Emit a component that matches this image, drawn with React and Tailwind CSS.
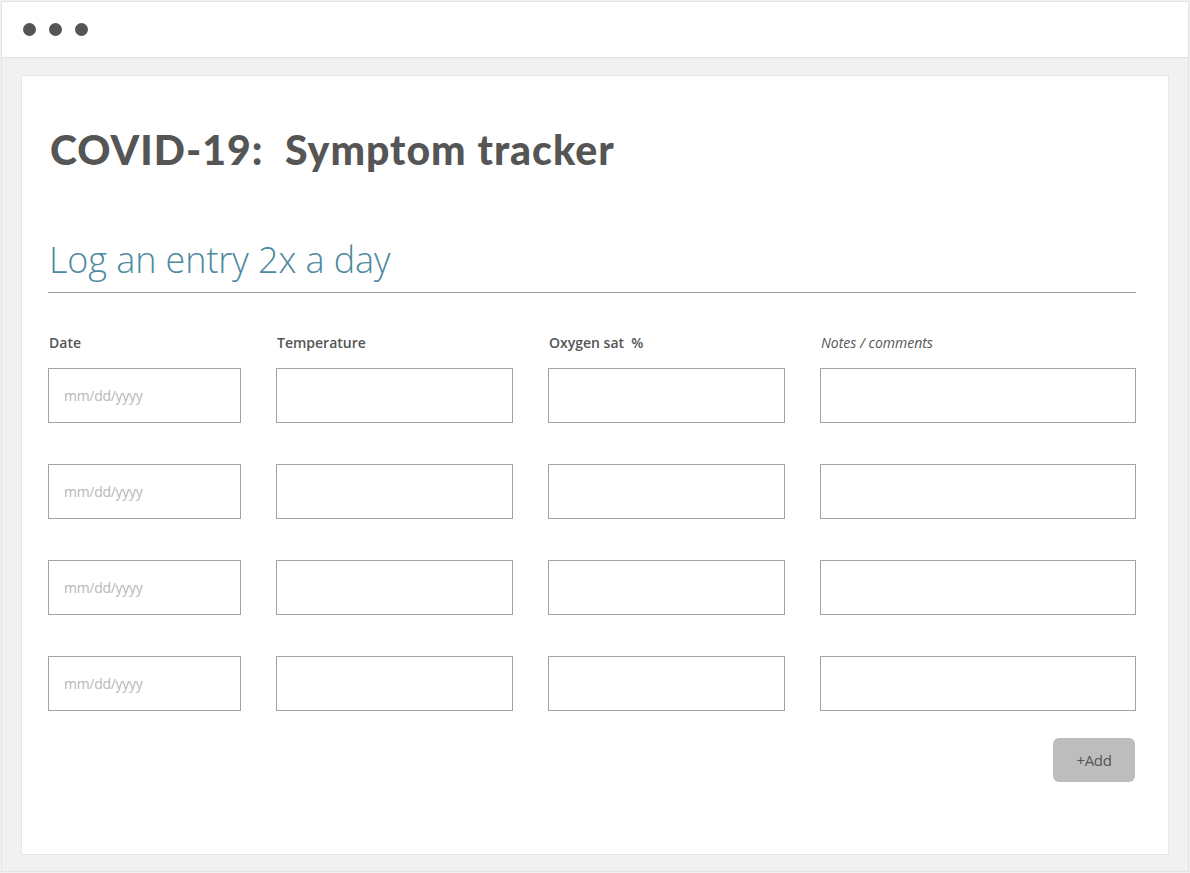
import React from 'react';

const rows = [0, 1, 2, 3];

function Field({ w, placeholder }) {
  return (
    <div className={`${w} h-[55px] border border-[#a3a3a3] bg-white flex items-center px-[15px]`}>
      {placeholder && <span className="text-[14px] text-[#b8b8b8] tracking-[-0.3px]">{placeholder}</span>}
    </div>
  );
}

export default function App() {
  return (
    <div className="w-[1190px] h-[873px] bg-[#f1f1f1] p-px font-['Open_Sans',sans-serif] text-[#555]">
      <div className="h-[871px] w-[1188px] border border-[#e4e4e4] flex flex-col">
        <div className="h-[56px] bg-white border-b border-[#e4e4e4] flex items-center gap-[13px] pl-[21px] shrink-0">
          <span className="w-[13px] h-[13px] rounded-full bg-[#555]" />
          <span className="w-[13px] h-[13px] rounded-full bg-[#555]" />
          <span className="w-[13px] h-[13px] rounded-full bg-[#555]" />
        </div>

        <div className="ml-[19px] mt-[17px] w-[1148px] h-[780px] bg-white border border-[#e6e6e6] pl-[26px] pt-[48px]">
          <h1 className="font-['Lato',sans-serif] font-black text-[41px] leading-[52px] text-[#555] tracking-[1px] whitespace-pre pl-[2px]">
            COVID-19:  Symptom tracker
          </h1>

          <div className="mt-[60px] w-[1088px] border-b border-[#999] pb-[8px]">
            <h2 className="font-light text-[36px] leading-[48px] text-[#4d8aa0] tracking-[-0.1px] pl-[1px]">Log an entry 2x a day</h2>
          </div>

          <div className="mt-[40px] flex gap-[35px] text-[14px] font-semibold leading-[20px] pl-[1px]">
            <div className="w-[193px]">Date</div>
            <div className="w-[237px]">Temperature</div>
            <div className="w-[237px] whitespace-pre">Oxygen sat  %</div>
            <div className="w-[316px] italic font-normal">Notes / comments</div>
          </div>

          <div className="mt-[15px] flex flex-col gap-[41px]">
            {rows.map((r) => (
              <div key={r} className="flex gap-[35px]">
                <Field w="w-[193px]" placeholder="mm/dd/yyyy" />
                <Field w="w-[237px]" />
                <Field w="w-[237px]" />
                <Field w="w-[316px]" />
              </div>
            ))}
          </div>

          <div className="w-[1087px] flex justify-end mt-[27px]">
            <button className="w-[82px] h-[44px] rounded-[6px] bg-[#bdbdbd] text-[15px] text-[#555] tracking-[-0.3px]">+Add</button>
          </div>
        </div>
      </div>
    </div>
  );
}
